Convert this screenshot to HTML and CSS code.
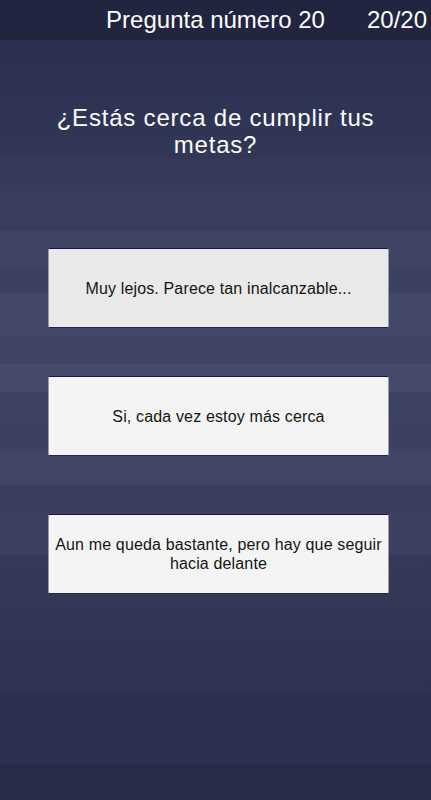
FILE: index.html
```html
<!DOCTYPE html>
<html lang="es">
    <head>
        <meta charset="utf-8">
        <meta name="viewport" content="width=device-width, initial-scale=1.0">
        <title>Pregunta número 20</title>
        <link rel="stylesheet" href="styles.css">
    </head>
    <body>
        <div class="top-bar">
            <span></span>
            <span class="title">Pregunta número 20</span>
            <span class="counter">20/20</span>
        </div>

        <div class="quiz">
            <h1 class="question">¿Estás cerca de cumplir tus metas?</h1>

            <div class="answers">
                <button class="answer selected">Muy lejos. Parece tan inalcanzable...</button>
                <button class="answer">Si, cada vez estoy más cerca</button>
                <button class="answer">Aun me queda bastante, pero hay que seguir hacia delante</button>
            </div>
        </div>
    </body>
</html>
```

FILE: styles.css
```css
html, body {
    height: 100%;
}

body {
    margin: 0;
    font-family: "Liberation Sans", Arial, sans-serif;
    color: #ffffff;
    background-color: #2f3352;
    background-image: linear-gradient(to bottom,
        #22253f 0px, #22253f 40px,
        #2c3050 40px, #323756 159px,
        #363b5a 159px, #363b5a 191px,
        #3a3e5e 191px, #3a3e5e 231px,
        #404463 231px, #404463 267px,
        #3c4161 267px, #3c4161 293px,
        #43486a 293px, #43486a 336px,
        #3f4466 336px, #3f4466 364px,
        #45496b 364px, #45496b 392px,
        #3d4264 392px, #3d4264 421px,
        #3d4061 421px, #3d4061 449px,
        #424666 449px, #424666 485px,
        #3a3d5c 485px, #3a3d5c 513px,
        #3d4060 513px, #3d4060 554px,
        #363a58 554px, #2f3352 692px,
        #2d3150 692px, #2d3150 764px,
        #292c49 764px, #292c49 800px);
    background-repeat: no-repeat;
}

.top-bar {
    height: 40px;
    display: grid;
    grid-template-columns: 1fr auto 1fr;
    align-items: center;
    font-size: 24px;
}

.counter {
    justify-self: end;
    padding-right: 4px;
}

.quiz {
    display: flex;
    flex-direction: column;
    align-items: center;
}

.question {
    width: 340px;
    margin: 64px 0 0;
    font-size: 24px;
    font-weight: normal;
    line-height: 27px;
    letter-spacing: 0.8px;
    text-align: center;
}

.answers {
    display: flex;
    flex-direction: column;
    margin-top: 90px;
    padding-left: 6px;
}

.answer {
    width: 341px;
    height: 80px;
    padding: 0 4px;
    margin: 0;
    font-family: inherit;
    font-size: 16px;
    letter-spacing: 0.15px;
    line-height: 19px;
    color: #141414;
    background-color: #f4f4f4;
    border: 1px solid #9a9aaa;
    border-top-color: #14164a;
    border-bottom-color: #23254c;
    border-radius: 2px;
}

.answer.selected {
    background-color: #e9e9e9;
}

.answer + .answer {
    margin-top: 48px;
}

.answer:last-child {
    margin-top: 58px;
}
```
